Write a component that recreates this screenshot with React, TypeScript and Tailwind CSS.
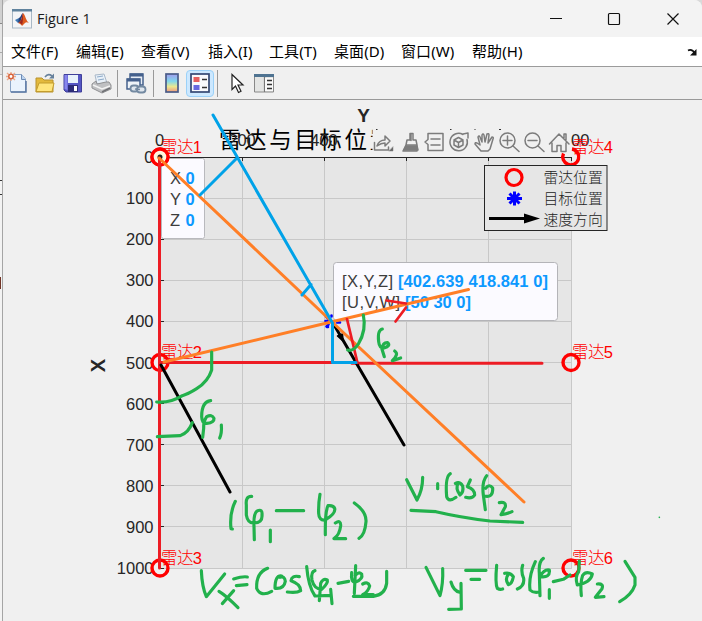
import React from "react";

const menus = [
  { label: "文件(F)", w: "w-[65px]" },
  { label: "编辑(E)", w: "w-[65px]" },
  { label: "查看(V)", w: "w-[67px]" },
  { label: "插入(I)", w: "w-[61px]" },
  { label: "工具(T)", w: "w-[65px]" },
  { label: "桌面(D)", w: "w-[67px]" },
  { label: "窗口(W)", w: "w-[71px]" },
  { label: "帮助(H)", w: "w-[65px]" },
];

const SANS = "'Liberation Sans','Noto Sans CJK SC',sans-serif";
const SONG = "'Liberation Sans','Noto Sans CJK SC',sans-serif";

function MatlabLogo() {
  return (
    <svg className="h-5 w-5" viewBox="0 0 20 20">
      <rect x=".5" y=".5" width="19" height="18.500" fill="#f4f5f7" stroke="#a9b8c5" />
      <rect x="0" y="0" width="20" height="2.500" fill="#5f829d" />
      <path d="M3 11l4-2 2 2-3 3z" fill="#3d78b5" />
      <path d="M7 9c2-1 2-4 4-5l-2 8-3 2z" fill="#263f79" />
      <path d="M11 4c2 1 3 8 6 10-2-1-3-1-4 0l-3 3c-1-2-2-2-4-3 3-1 4-6 5-10z" fill="#dd5b20" />
      <path d="M11 4c0 5 0 9-1 12-1-2-2-2-3-2 3-2 3-7 4-10z" fill="#9c2720" />
    </svg>
  );
}

function ToolIcon({ name }: { name: string }) {
  return (
    <svg className="h-[22px] w-[22px] shrink-0" viewBox="0 0 22 22">
      {name === "new" && (
        <>
          <path d="M4.500 2.500h11l4 4.500v13h-15z" fill="#eaf3fd" stroke="#8aa4c6" />
          <path d="M15.500 2.500v5h4" fill="#bcd3ee" stroke="#6d8bb4" />
          <path d="M5 20h15V9" fill="none" stroke="#5a77a3" strokeWidth="1.500" />
          <path d="M1 1l8 7M9 1L1 8M5 0v9M0 4.500h10" stroke="#eba98c" strokeWidth="1.400" />
          <circle cx="5" cy="4.500" r="2.200" fill="#fff" stroke="#d8643c" strokeWidth="1.500" />
        </>
      )}
      {name === "open" && (
        <>
          <path d="M2 6h6l2 2h9v12H2z" fill="#e3b93c" stroke="#b8922c" />
          <path d="M2 19.500l3-8.500h15l-2 8.500z" fill="#ffe57c" stroke="#c39c2c" />
          <path d="M11 5q3-4 7-1" fill="none" stroke="#66809b" strokeWidth="1.600" />
          <path d="M20 1.500v5h-5z" fill="#66809b" />
        </>
      )}
      {name === "save" && (
        <>
          <path d="M2 2.500h17.500v17.500H4L2 18z" fill="#5556c4" stroke="#40409a" />
          <path d="M6 3h10v8H6z" fill="#e8f2fb" />
          <path d="M2.500 3l3 0v15l-3-1z" fill="#8786ed" />
          <path d="M6 13h10v7H6z" fill="#2c2c78" />
          <path d="M12 14h3v5h-3z" fill="#fff" />
        </>
      )}
      {name === "print" && (
        <>
          <path d="M5 3l9-1 3 9-10 1z" fill="#e8f0f8" stroke="#a9b8c8" />
          <path d="M7 5l6-1M8 8l6-1" stroke="#8caac9" />
          <path d="M2 12l4-3 1 3 9-2 3 0 2 3v4l-9 4-10-5z" fill="#bfc0c2" stroke="#909193" />
          <path d="M3 13l9 4 8-3" fill="none" stroke="#f3f3f3" strokeWidth="1.500" />
          <path d="M12 20l8-4" stroke="#707175" strokeWidth="1.800" />
        </>
      )}
      {name === "link" && (
        <>
          <path d="M5 2h13v11H5z" fill="#e7edf5" stroke="#44608c" strokeWidth="1.500" />
          <path d="M5 3h13" stroke="#44608c" strokeWidth="3" />
          <path d="M2 7h13v10H2z" fill="#eef3f8" stroke="#44608c" strokeWidth="1.500" />
          <path d="M2 8h13" stroke="#44608c" strokeWidth="3" />
          <rect x="5.500" y="13.500" width="8" height="6" rx="3" fill="#dfe6ee" stroke="#7389a1" strokeWidth="1.800" />
          <rect x="12" y="14.500" width="8.500" height="6" rx="3" fill="#dfe6ee" stroke="#7389a1" strokeWidth="1.800" />
          <path d="M10 17l5 .5" stroke="#7389a1" strokeWidth="1.600" />
        </>
      )}
      {name === "colorbar" && (
        <>
          <defs>
            <linearGradient id="jet" x1="0" y1="0" x2="0" y2="1">
              <stop offset="0" stopColor="#a29bed" />
              <stop offset=".4" stopColor="#80d7ed" />
              <stop offset=".7" stopColor="#ece98e" />
              <stop offset="1" stopColor="#ee9780" />
            </linearGradient>
          </defs>
          <rect x="5" y="2" width="12" height="18" fill="url(#jet)" stroke="#4a5c88" strokeWidth="1.700" />
        </>
      )}
      {name === "legend" && (
        <>
          <rect x="2" y="2" width="18" height="18" fill="#f8f9fc" stroke="#344874" strokeWidth="1.700" />
          <path d="M4.500 5h6v5h-6z" fill="#e55e5e" />
          <path d="M4.500 13h6v5h-6z" fill="#6868e0" />
          <path d="M13 7.500h5M13 15.500h5" stroke="#333" strokeWidth="1.400" />
        </>
      )}
      {name === "cursor" && (
        <path d="M6 2.500v15l3.500-3.500 3 6.500 2.500-1.200-3-6.300h5z" fill="#fff" stroke="#222" strokeWidth="1.200" />
      )}
      {name === "inspector" && (
        <>
          <path d="M1.500 2.500h19V20h-19z" fill="#e4e5e4" stroke="#888" />
          <path d="M1 3.500h20" stroke="#4f7391" strokeWidth="3" />
          <path d="M11.500 5v15" stroke="#777" strokeWidth="1.200" />
          <path d="M12 6h8v13h-8z" fill="#fafafa" />
          <path d="M14 8.500h5M14 12.500h5M14 16.500h5" stroke="#333" strokeWidth="1.500" />
        </>
      )}
    </svg>
  );
}

function TitleBar() {
  return (
    <div className="flex h-[37px] items-center bg-[#f3f3f3] pl-[9px]">
      <MatlabLogo />
      <span className="ml-[5px] text-[14.400px] text-[#1b1b1b] [font-family:'Open_Sans','Noto_Sans',sans-serif]">Figure 1</span>
      <svg className="ml-auto h-9 w-[170px]" viewBox="532 0 170 36" fill="none" stroke="#111" strokeWidth="1.200">
        <path d="M550 17.500h12" />
        <rect x="608.500" y="12.500" width="11" height="11" rx="1" />
        <path d="M667.500 12.500l11 11M678.500 12.500l-11 11" />
      </svg>
    </div>
  );
}

function MenuBar() {
  return (
    <div className="flex h-[30px] items-center border-b border-[#9b9b9b] bg-white pl-2">
      {menus.map((m) => (
        <span key={m.label} className={`${m.w} shrink-0 whitespace-nowrap text-[15px] tracking-[0.1px] text-black [font-family:'Noto_Sans','Noto_Sans_CJK_SC',sans-serif]`}>
          {m.label}
        </span>
      ))}
      <svg className="ml-auto mr-1 h-3 w-3" viewBox="0 0 12 12">
        <path d="M2 4.500q4-2 7 3" fill="none" stroke="#111" strokeWidth="1.800" />
        <path d="M10.500 3v6.500H4z" fill="#111" />
      </svg>
    </div>
  );
}

function Divider({ gap }: { gap: string }) {
  return <div className={`${gap} h-[27px] w-px shrink-0 bg-[#999]`} />;
}

function ToolBar() {
  return (
    <div className="flex h-[33px] items-center border-b border-[#999] bg-[#f0f0f0] pl-[3px]">
      <div className="flex gap-[6px]">
        <ToolIcon name="new" />
        <ToolIcon name="open" />
        <ToolIcon name="save" />
        <ToolIcon name="print" />
      </div>
      <Divider gap="ml-[5px] mr-[7px]" />
      <ToolIcon name="link" />
      <Divider gap="ml-[6px] mr-[7px]" />
      <ToolIcon name="colorbar" />
      <div className="ml-[3px] flex h-[27px] w-[28px] items-center justify-center rounded-sm border border-[#9bd1f8] bg-[#cce8ff]">
        <ToolIcon name="legend" />
      </div>
      <Divider gap="ml-[3px] mr-[8px]" />
      <ToolIcon name="cursor" />
      <div className="ml-[5px] flex">
        <ToolIcon name="inspector" />
      </div>
    </div>
  );
}

const radars = [
  { x: 160, y: 157, n: 1 },
  { x: 160, y: 362.5, n: 2 },
  { x: 160, y: 568, n: 3 },
  { x: 571, y: 362.5, n: 5 },
  { x: 571, y: 568, n: 6 },
];

function Axes() {
  const ticks = [0, 1, 2, 3, 4, 5, 6, 7, 8, 9, 10];
  return (
    <g fontFamily={SANS}>
      <rect x="160" y="157" width="411.500" height="411.500" fill="#e6e6e6" />
      <g stroke="#c8c8c8" strokeWidth="1">
        {ticks.slice(1).map((t) => (
          <path key={t} d={`M160 ${Math.floor(157 + t * 41.1) + 0.5}H572`} />
        ))}
        {[242.5, 324.5, 406.5, 488.5, 571.5].map((x) => (
          <path key={x} d={`M${x} 157V568`} />
        ))}
      </g>
      <g stroke="#262626">
        <path d="M160 157.500H572" />
        {ticks.map((t) => (
          <path key={t} d={`M160 ${Math.floor(157 + t * 41.1) + 0.5}h4`} />
        ))}
        {[242.5, 324.5, 406.5, 488.5, 571.5].map((x) => (
          <path key={x} d={`M${x} 157v4`} />
        ))}
      </g>
      <text x="219" y="148" fontSize="22.500" fill="#000" fontFamily={SONG} textLength="173">雷达与目标位置</text>
      <g fontSize="16.500" fill="#262626">
        {ticks.map((t) => (
          <text key={t} x="153.500" y={163 + t * 41.1} textAnchor="end">{t * 100}</text>
        ))}
        <text x="159.500" y="146" textAnchor="middle">0</text>
        <text x="242" y="146" textAnchor="middle">200</text>
        <text x="324" y="146" textAnchor="middle">400</text>
        <text x="571" y="146" textAnchor="middle">1000</text>
      </g>
      <text x="363.500" y="122" fontSize="19" fontWeight="bold" fill="#262626" textAnchor="middle">Y</text>
      <text transform="translate(105 365.500) rotate(-90)" fontSize="20" fontWeight="bold" fill="#262626" textAnchor="middle">X</text>
      {radars.map((r) => (
        <g key={r.n}>
          <circle cx={r.x} cy={r.y} r="8" fill="none" stroke="#f00" strokeWidth="3.400" />
          <text x={r.x + 1} y={r.y - 4.5} fontSize="16.500" fontWeight="300" fill="#f00" textLength="41">{`雷达${r.n}`}</text>
        </g>
      ))}
    </g>
  );
}

function AxesToolbar() {
  return (
    <g fill="none" stroke="#7c7c7c" strokeWidth="1.500" strokeLinecap="round" strokeLinejoin="round">
      <path d="M372.500 126H571V152.500H372.500z" fill="#f0f0f0" stroke="none" />
      <g fill="#333" stroke="none">
        <path d="M376 129h1.500v1h-1.500zM450 129h1.500v1h-1.500zM474.500 129h1v1h-1zM499 129h2v1h-2z" />
      </g>
      <path d="M374.500 142.500v7.500h14v-3M377 146q2-6 8-6v-4l5 5-5 5v-3q-4 0-8 3z" />
      <path d="M393 147v4h-4z" fill="#666" strokeWidth=".5" />
      <path d="M411 133.500v7M410 133.500v6.500h-3l-1 5h11l-1-5h-3v-6.500zM406 145l-3 6h14v-6" />
      <path d="M404 150h14l-1-4h-11z" fill="#7c7c7c" />
      <path d="M428 133.500h15v17h-15v-6l-3-2.500 3-2.500zM431 139h9M431 145h9" />
      <path d="M463 134.500a8.700 8.700 0 1 0 4 5M463 134l5-1v5M458.500 137.500l4.500 2.500v5l-4.500 2.500-4.500-2.500v-5zM454 140l4.500 2.500 4.500-2.500M458.500 142.500v5" />
      <path d="M481 151l-6-7q0-2 2-1l3 2-2-8q1-2 2 0l2 5v-7q1-2 2 0l1 7 2-8q2-1 2 1l-1 8 4-6q2 0 1 2l-3 10-2 2z" />
      <circle cx="507.500" cy="140.500" r="7.500" />
      <path d="M513 146l6 5.500M503 140.500h9M507.500 136v9" />
      <circle cx="532.500" cy="140.500" r="7.500" />
      <path d="M538 146l6 5.500M528 140.500h9" />
      <path d="M549.500 144l9.500-10 10 10M552 143v8.500h5v-6h4v6h5V143M564 138v-4h2v6" />
    </g>
  );
}

function CoveredRadar() {
  return (
    <g>
      <path d="M563.500 153.500A8 8 0 1 0 572 149" fill="none" stroke="#f00" strokeWidth="3.400" />
      <text x="572" y="152.500" fontSize="16.500" fontWeight="300" fill="#f00" fontFamily={SANS} textLength="41">雷达4</text>
    </g>
  );
}

function Legend() {
  return (
    <g>
      <rect x="484.500" y="165.500" width="122.500" height="65" fill="#e6e6e6" stroke="#262626" />
      <circle cx="514" cy="177.500" r="8" fill="none" stroke="#f00" strokeWidth="3.200" />
      <path d="M514.500 191.500v14M507 198.500h15M509.500 193.500l10 10M519.500 193.500l-10 10" stroke="#00f" strokeWidth="3" />
      <path d="M489 218.500h38" stroke="#000" strokeWidth="3" />
      <path d="M524 213.500l16 5-16 5z" fill="#000" />
      <g fontSize="14.800" fontWeight="300" fontFamily={SONG} fill="#222">
        <text x="543.500" y="183">雷达位置</text>
        <text x="543.500" y="204">目标位置</text>
        <text x="543.500" y="225">速度方向</text>
      </g>
    </g>
  );
}

function DataTips() {
  return (
    <g fontFamily={SANS} fontSize="16.500" fill="#3d3d3d">
      <rect x="161.500" y="158.500" width="43" height="80" rx="2" fill="#fbfaff" stroke="#b9b9bd" />
      {["X", "Y", "Z"].map((a, i) => (
        <g key={a}>
          <text x="170" y={184 + i * 21}>{a}</text>
          <text x="185.500" y={184 + i * 21} fontWeight="bold" fill="#0d99ff">0</text>
        </g>
      ))}
      <rect x="333.500" y="262.500" width="224" height="58" rx="3" fill="#fbfaff" stroke="#b4b4b8" />
      <text x="342" y="287" textLength="51">[X,Y,Z]</text>
      <text x="398" y="287" fontWeight="bold" fill="#0d99ff" textLength="150">[402.639 418.841 0]</text>
      <text x="342" y="308" textLength="58">[U,V,W]</text>
      <text x="405" y="308" fontWeight="bold" fill="#0d99ff" textLength="66">[50 30 0]</text>
    </g>
  );
}

/* Freehand pen strokes over the plot, grouped by the area each set was sketched in. */
function Ink() {
  return (
    <g fill="none" strokeLinecap="round" strokeLinejoin="round">
      <path d="M325.500 321h3M327 327h1M331.500 315.500v1M337 322.500h3M326.500 326.500l2-2M326 316.500l2 2" stroke="#00f" strokeWidth="2.600" />
      <circle cx="160" cy="157" r="3.500" fill="#222" stroke="#fff6d8" strokeWidth="2" />
      <g strokeWidth="3">
        <path d="M159.500 158V568M160 362.500H357M352 363.300H542" stroke="#ed1c24" />
        <path d="M161 365L230 492M333 323L404 445" stroke="#000" />
        <path d="M337.500 336l5-2 .5 7z" stroke="#000" strokeWidth="1.500" fill="#000" />
        <path d="M159 158L331 321L524 502M164 362L331 322L468.500 289.500" stroke="#ff7f27" />
        <path d="M347 319l10.500 44M386.500 300.500l19.500 3M406 307.500l-10.500 14" stroke="#ed1c24" strokeWidth="2.700" />
        <path d="M213 115L332.500 323V362.500H356M237 158L200 195M311 284.500L302 295" stroke="#00a2e8" />
      </g>
      <g stroke="#22b14c" strokeWidth="9.500">
        <g transform="translate(80 240) scale(.33333)">
          <path d="M395 336V390Q384 425 350 446Q325 462 307 467Q270 490 230 486M232 590L300 587Q325 580 337 548" />
          <path d="M392 482Q365 485 365 530Q366 552 380 550Q403 548 402 535Q396 522 380 530Q370 545 371 565L368 592M424 555Q426 580 419 594" />
        </g>
        <g transform="translate(290 240) scale(.33333)">
          <path d="M220 225Q230 270 205 312Q190 335 173 330" />
          <path d="M277 267Q262 270 266 305Q268 325 282 324Q303 317 293 308Q278 307 276 328L283 350M314 333Q328 342 307 362L332 354" />
        </g>
        <g transform="translate(80 460) scale(.33333)">
          <path d="M466 124Q448 160 453 206L457 207M515 109Q496 108 499 135V165Q503 189 520 189Q548 190 546 165Q548 147 533 152Q520 158 522 200L523 239M571 210V245M589 152H671" />
          <path d="M720 103Q715 130 716 160Q717 182 735 180Q768 162 764 145Q760 135 744 137Q735 155 736 224M766 189Q783 178 782 197Q779 225 762 236H797M823 129Q860 155 858 185Q855 225 837 235" />
          <path d="M364 332Q366 380 379 410L434 342M417 394Q440 408 474 443M461 392L427 431M461 357Q490 348 502 351M469 377L501 374" />
          <path d="M563 325Q528 338 530 385Q542 412 575 394M605 348Q585 345 585 385Q612 388 616 364Q614 347 600 352M658 350Q635 345 633 362Q662 372 662 392Q650 400 622 396" />
          <path d="M680 320Q685 380 705 408L750 406M705 332Q692 335 696 360Q702 387 725 388Q745 370 742 360Q728 354 722 370L718 422M752 388L756 431M774 370L806 364" />
          <path d="M827 317L823 400M815 338Q812 366 825 367Q850 358 845 342Q836 333 825 347M848 372Q864 363 869 378Q865 395 848 404H880M820 409H880Q915 405 920 370V334" />
        </g>
        <g transform="translate(380 440) scale(.33333)">
          <path d="M80 119L111 180Q128 150 128 112M173 131V146M211 101Q195 110 200 170Q206 188 228 172M235 128Q225 145 240 165Q252 155 248 138Q240 124 226 130M271 120L262 140Q285 148 284 165Q277 177 257 172" />
          <path d="M320 107Q305 125 310 165L316 209M312 168Q340 175 338 144Q328 130 317 145M358 188Q379 184 376 200L363 224Q380 222 396 215M93 211L168 215Q240 232 330 243L428 247" />
          <path d="M138 382L180 467Q190 430 188 386M213 426Q220 452 239 457M243 430L244 507L206 508M257 391H318M273 418H299M350 376Q345 430 352 445Q360 450 368 447" />
          <path d="M374 400Q390 396 400 410Q396 432 385 434Q374 417 384 405M428 376Q422 395 431 415Q434 438 412 447M466 365Q445 410 450 450Q460 460 478 456M490 355Q475 365 478 400L480 467M480 410Q511 415 508 390Q492 387 480 410M508 449V475M520 425L550 418L570 405" />
          <path d="M598 363L596 395Q584 410 592 435Q632 428 637 402Q618 392 608 406Q600 430 604 467M652 432Q672 430 666 446L646 472L672 470M735 364L765 412V435Q755 465 719 485" />
          <path d="M838 232h.1" strokeWidth="5" />
        </g>
      </g>
    </g>
  );
}

export default function App() {
  return (
    <div className="flex h-[621px] w-[702px] overflow-hidden bg-[#d9d9d9]">
      <div className="flex w-[3px] shrink-0 flex-col border-r border-[#a5a5a5]">
        <div className="h-[23px] bg-[#d0d0d0]" />
        <div className="h-[29px] border-t border-[#888] bg-[#e5e5e5]" />
        <div className="h-[22px] border-t border-[#aaa] bg-[#e2e2e2]" />
        <div className="h-[106px] border-t border-[#bbb] bg-[#f3f3f3]" />
        <div className="h-[15px] border-y border-[#333] bg-[#f3f3f3]" />
        <div className="h-[82px] bg-[#f3f3f3]" />
        <div className="h-[12px] border-l border-[#713426] bg-[#f3f3f3]" />
        <div className="flex-1 bg-[#f3f3f3]" />
      </div>
      <div className="flex w-[699px] shrink-0 flex-col overflow-hidden rounded-t-lg bg-[#f0f0f0]">
        <TitleBar />
        <MenuBar />
        <ToolBar />
        <svg className="h-[521px] w-[699px] shrink-0" viewBox="3 100 699 521">
          <Axes />
          <AxesToolbar />
          <CoveredRadar />
          <Legend />
          <DataTips />
          <circle cx="160" cy="157" r="8" fill="#fff6e4" stroke="#f00" strokeWidth="3.400" />
          <Ink />
        </svg>
      </div>
    </div>
  );
}
